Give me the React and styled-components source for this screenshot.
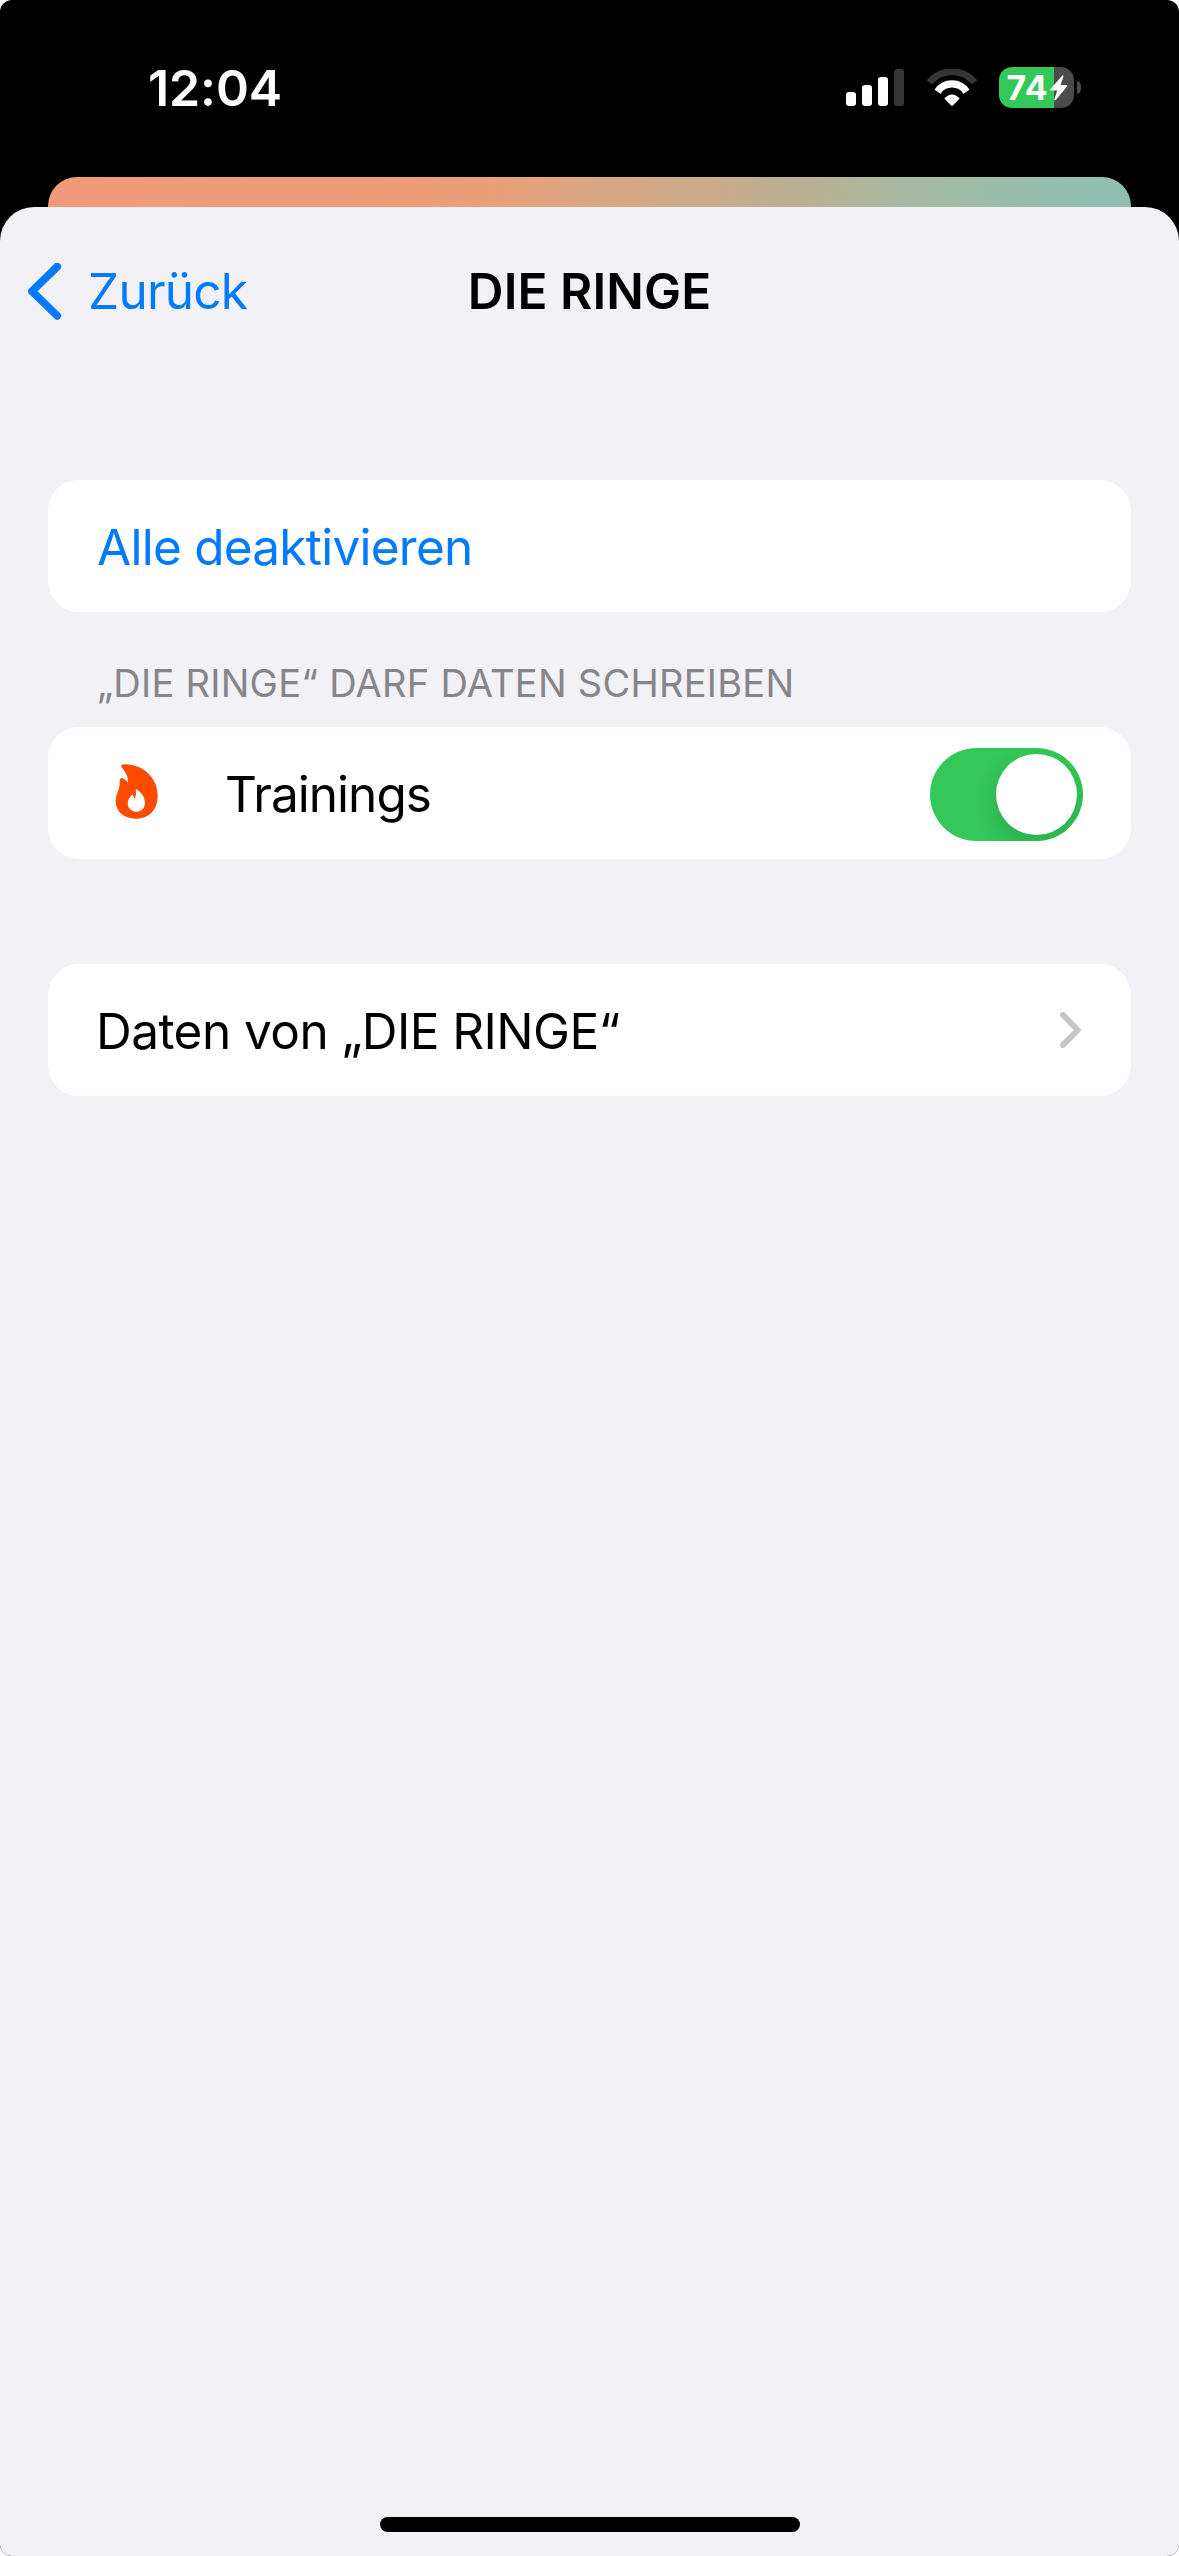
import React, { useState } from "react";
import styled, { createGlobalStyle, ThemeProvider } from "styled-components";

const theme = {
  blue: "#007aff",
  green: "#34c759",
  background: "#f1f1f6",
  secondary: "#86858a",
};

const GlobalStyle = createGlobalStyle`
  *, *::before, *::after { box-sizing: border-box; }
  body {
    margin: 0;
    background: #fff;
    font-family: Inter, "Liberation Sans", sans-serif;
  }
  button {
    border: 0;
    padding: 0;
    background: none;
    font: inherit;
    text-align: left;
  }
  svg { display: block; flex: none; }
`;

const Screen = styled.div`
  display: flex;
  flex-direction: column;
  width: 1179px;
  height: 2556px;
  background: #000;
  border-radius: 12px;
  overflow: hidden;
`;

const StatusBar = styled.header`
  display: flex;
  align-items: center;
  justify-content: space-between;
  height: 177px;
  flex: none;
  padding: 0 98px 2px 148px;
  color: #fff;
`;

const Time = styled.time`
  padding-top: 1px;
  font-size: 50px;
  font-weight: 600;
  line-height: 60px;
  letter-spacing: -0.1px;
`;

const Indicators = styled.div`
  display: flex;
  align-items: center;
  gap: 22.5px;
`;

const Battery = styled.div`
  display: flex;
  align-items: center;
  gap: 3px;
`;

const BatteryBody = styled.div`
  display: flex;
  align-items: center;
  width: 75px;
  height: 41px;
  padding-left: 7.5px;
  border-radius: 13px;
  background: linear-gradient(
    to right,
    ${({ theme }) => theme.green} ${({ $level }) => $level}%,
    #4b4b4d ${({ $level }) => $level}%
  );
`;

const BatteryLevel = styled.span`
  width: 43.5px;
  font-size: 34px;
  font-weight: 700;
  line-height: 41px;
  letter-spacing: 0.4px;
`;

const BatteryCap = styled.span`
  width: 4px;
  height: 13px;
  border-radius: 0 5px 5px 0 / 0 6.5px 6.5px 0;
  background: #4b4b4d;
`;

const SheetBehind = styled.div`
  height: 30px;
  flex: none;
  margin: 0 48px;
  border-radius: 29px 29px 0 0;
  background: linear-gradient(
    100deg,
    #f09a7a 0%,
    #ee9b78 34%,
    #e5a179 43%,
    #d9a682 51%,
    #cbab89 60%,
    #bbb093 69%,
    #a6baa3 80%,
    #94beaf 92%,
    #8fc0b2 100%
  );
`;

const Sheet = styled.main`
  display: flex;
  flex-direction: column;
  flex: 1;
  border-radius: 34px 34px 0 0;
  background: ${({ theme }) => theme.background};
`;

const NavBar = styled.nav`
  display: grid;
  grid-template-columns: 1fr auto 1fr;
  align-items: center;
  height: 168px;
  padding: 0 28px;
`;

const BackButton = styled.button`
  display: flex;
  align-items: center;
  gap: 26px;
  color: ${({ theme }) => theme.blue};
  font-size: 49.5px;
  line-height: 60px;
  letter-spacing: -0.75px;
`;

const Title = styled.h1`
  margin: 0;
  font-size: 49.5px;
  font-weight: 600;
  line-height: 60px;
  letter-spacing: 0.1px;
`;

const Content = styled.div`
  display: flex;
  flex-direction: column;
  padding: 105px 48px 0;
`;

const SectionHeader = styled.h2`
  margin: 48px 49px 21px;
  color: ${({ theme }) => theme.secondary};
  font-size: 38px;
  font-weight: 400;
  line-height: 46px;
  letter-spacing: 0.26px;
  white-space: nowrap;
`;

const Row = styled.div`
  display: flex;
  align-items: center;
  height: 132px;
  margin-top: ${({ $spaced }) => ($spaced ? 105 : 0)}px;
  padding: 0 ${({ $endInset }) => $endInset ?? 48}px 0 ${({ $inset }) => $inset ?? 48}px;
  border-radius: 31px;
  background: #fff;
`;

const RowLabel = styled.span`
  flex: 1;
  padding-top: 2px;
  color: ${({ theme, $accent }) => ($accent ? theme.blue : "#000")};
  font-size: 49.5px;
  line-height: 60px;
  letter-spacing: ${({ $tracking }) => $tracking}px;
  white-space: nowrap;
`;

const IconSlot = styled.span`
  width: 110px;
  padding-bottom: 4px;
`;

const SwitchTrack = styled.button`
  display: flex;
  align-items: center;
  justify-content: ${({ $on }) => ($on ? "flex-end" : "flex-start")};
  width: 153px;
  height: 93px;
  padding: 0 6px;
  margin-top: 3px;
  border-radius: 47px;
  overflow: hidden;
  background: ${({ theme, $on }) => ($on ? theme.green : "#e9e9ea")};
`;

const SwitchKnob = styled.span`
  width: 81px;
  height: 81px;
  border-radius: 50%;
  background: #fff;
  box-shadow: 0 9px 24px rgba(0, 0, 0, 0.15);
`;

const HomeIndicator = styled.div`
  width: 420px;
  height: 15px;
  margin: auto auto 24px;
  border-radius: 8px;
  background: #000;
`;

const SignalIcon = () => (
  <svg width="58" height="37" viewBox="0 0 58 37" fill="#fff">
    <rect x="0" y="23" width="10" height="14" rx="3" />
    <rect x="16" y="16" width="10" height="21" rx="3" />
    <rect x="32" y="8" width="10" height="29" rx="3" />
    <rect x="48" y="0" width="10" height="37" rx="3" fill="#353535" />
  </svg>
);

const WifiIcon = () => (
  <svg width="50" height="37" viewBox="0 0 50 37" fill="none">
    <path d="M2.3 13.4A29.8 29.8 0 0 1 47.7 13.4" stroke="#353535" strokeWidth="6.7" />
    <path d="M10.5 22.8A17.3 17.3 0 0 1 39.5 22.8" stroke="#fff" strokeWidth="7.2" />
    <path d="M17.3 29.5Q25 21.6 32.7 29.5L25.8 36.6Q25 37.4 24.2 36.6Z" fill="#fff" />
  </svg>
);

const BoltIcon = () => (
  <svg width="18" height="26" viewBox="0 0 18 26" fill="#fff">
    <path d="M12.3.6 0.3 14.2Q-.2 15.3 1 15.5H7.2L4.3 24.4Q4.5 25.8 5.8 25L17.2 11.3Q17.6 10.2 16.5 10H10.6L13.6 1.2Q13.4.1 12.3.6Z" />
  </svg>
);

const BackIcon = () => (
  <svg width="34" height="57" viewBox="0 0 34 57" fill="none">
    <path
      d="M29.2 3.6 4 28.2 29.2 52.8"
      stroke="currentColor"
      strokeWidth="7.8"
      strokeLinecap="round"
      strokeLinejoin="round"
    />
  </svg>
);

const DisclosureIcon = () => (
  <svg width="21" height="36" viewBox="0 0 21 36" fill="none">
    <path
      d="M2.9 2.9 17.8 18 2.9 33.1"
      stroke="#c5c5c7"
      strokeWidth="5.8"
      strokeLinecap="round"
      strokeLinejoin="round"
    />
  </svg>
);

const FlameIcon = () => (
  <svg width="43" height="55" viewBox="226 371 129 165">
    <path
      fill="#ff4b00"
      d="M246 381C242 374 248 372 256 372C312 372 354 414 354 466C354 509 328 535 288 535C252 535 228 513 228 482C228 463 241 446 240 428C240 414 243 412 249 414C256 417 262 422 264 428C268 408 256 396 246 381Z"
    />
    <path
      fill="#fff"
      d="M288 448C288 446 290 446 292 448C306 457 316 470 316 487C316 503 305 514 290 514C275 514 264 504 264 489C264 478 271 471 276 465C278 463 280 463 281 466L284 475C289 471 290 460 288 448Z"
    />
  </svg>
);

export default function App() {
  const [allowed, setAllowed] = useState(true);

  return (
    <ThemeProvider theme={theme}>
      <GlobalStyle />
      <Screen>
        <StatusBar>
          <Time>12:04</Time>
          <Indicators>
            <SignalIcon />
            <WifiIcon />
            <Battery>
              <BatteryBody $level={74}>
                <BatteryLevel>74</BatteryLevel>
                <BoltIcon />
              </BatteryBody>
              <BatteryCap />
            </Battery>
          </Indicators>
        </StatusBar>
        <SheetBehind />
        <Sheet>
          <NavBar>
            <BackButton>
              <BackIcon />
              Zurück
            </BackButton>
            <Title>DIE RINGE</Title>
          </NavBar>
          <Content>
            <Row as="button" $inset={49} onClick={() => setAllowed(false)}>
              <RowLabel $accent $tracking={-0.75}>Alle deaktivieren</RowLabel>
            </Row>
            <SectionHeader>„DIE RINGE“ DARF DATEN SCHREIBEN</SectionHeader>
            <Row $inset={67}>
              <IconSlot>
                <FlameIcon />
              </IconSlot>
              <RowLabel $tracking={-0.95}>Trainings</RowLabel>
              <SwitchTrack
                role="switch"
                aria-checked={allowed}
                $on={allowed}
                onClick={() => setAllowed(!allowed)}
              >
                <SwitchKnob />
              </SwitchTrack>
            </Row>
            <Row $spaced $endInset={50}>
              <RowLabel $tracking={-0.55}>Daten von „DIE RINGE“</RowLabel>
              <DisclosureIcon />
            </Row>
          </Content>
          <HomeIndicator />
        </Sheet>
      </Screen>
    </ThemeProvider>
  );
}
